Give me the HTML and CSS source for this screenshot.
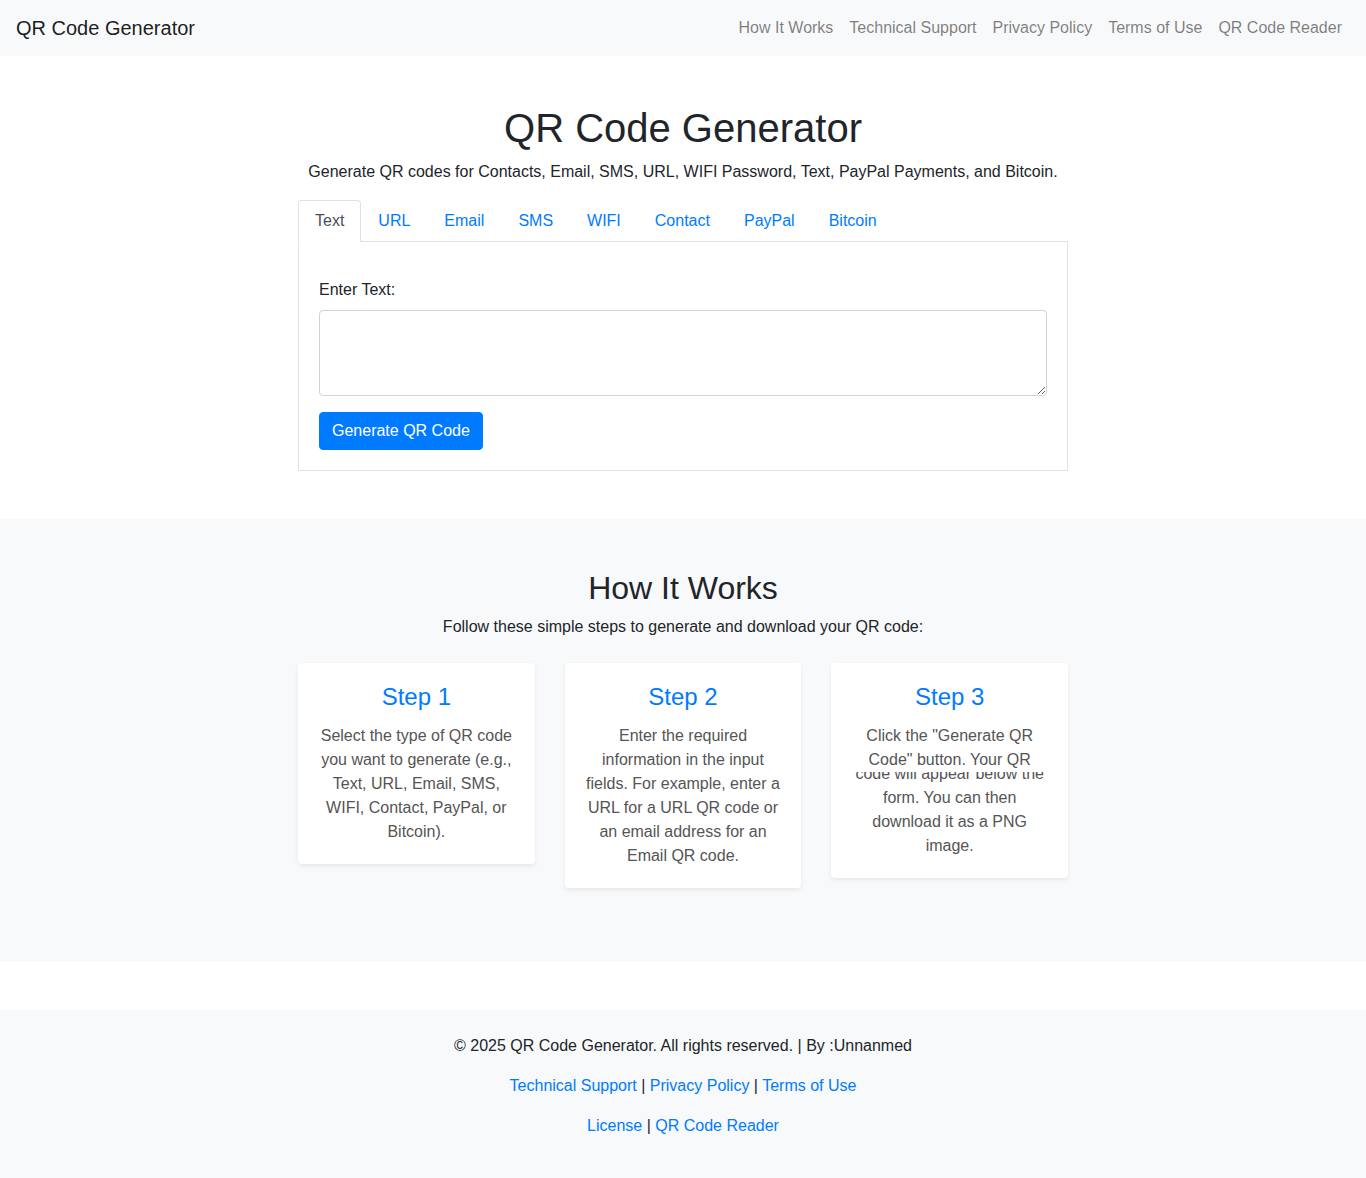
FILE: index.html
```html
<!DOCTYPE html>
<html lang="en">
<head>
<meta charset="utf-8">
<title>QR Code Generator</title>
<link rel="stylesheet" href="styles.css">
</head>
<body>
<nav class="navbar">
  <a class="brand" href="#">QR Code Generator</a>
  <ul class="nav-links">
    <li><a href="#">How It Works</a></li>
    <li><a href="#">Technical Support</a></li>
    <li><a href="#">Privacy Policy</a></li>
    <li><a href="#">Terms of Use</a></li>
    <li><a href="#">QR Code Reader</a></li>
  </ul>
</nav>

<main class="container main">
  <h1 class="title">QR Code Generator</h1>
  <p class="lead">Generate QR codes for Contacts, Email, SMS, URL, WIFI Password, Text, PayPal Payments, and Bitcoin.</p>
  <ul class="tabs">
    <li><a class="tab active" href="#">Text</a></li>
    <li><a class="tab" href="#">URL</a></li>
    <li><a class="tab" href="#">Email</a></li>
    <li><a class="tab" href="#">SMS</a></li>
    <li><a class="tab" href="#">WIFI</a></li>
    <li><a class="tab" href="#">Contact</a></li>
    <li><a class="tab" href="#">PayPal</a></li>
    <li><a class="tab" href="#">Bitcoin</a></li>
  </ul>
  <div class="tab-content">
    <div class="form-group">
      <label class="label" for="t">Enter Text:</label>
      <textarea id="t" class="textarea" rows="3"></textarea>
    </div>
    <button class="btn">Generate QR Code</button>
  </div>
</main>

<section class="how">
  <div class="container">
    <h2 class="how-title">How It Works</h2>
    <p class="how-sub">Follow these simple steps to generate and download your QR code:</p>
    <div class="steps">
      <div class="step">
        <h4 class="step-title">Step 1</h4>
        <p class="step-text">Select the type of QR code you want to generate (e.g., Text, URL, Email, SMS, WIFI, Contact, PayPal, or Bitcoin).</p>
      </div>
      <div class="step">
        <h4 class="step-title">Step 2</h4>
        <p class="step-text">Enter the required information in the input fields. For example, enter a URL for a URL QR code or an email address for an Email QR code.</p>
      </div>
      <div class="step">
        <h4 class="step-title">Step 3</h4>
        <p class="step-text step-a">Click the "Generate QR Code" button. Your QR</p>
        <p class="step-text step-b">code will appear below the form. You can then download it as a PNG image.</p>
      </div>
    </div>
  </div>
</section>

<footer class="footer">
  <p>© 2025 QR Code Generator. All rights reserved. | By :Unnanmed</p>
  <p><a href="#">Technical Support</a> | <a href="#">Privacy Policy</a> | <a href="#">Terms of Use</a></p>
  <p><a href="#">License</a> | <a href="#">QR Code Reader</a></p>
</footer>
</body>
</html>
```

FILE: styles.css
```css
* { box-sizing: border-box; }
html, body { margin: 0; padding: 0; }
body {
  font-family: "Liberation Sans", Arial, sans-serif;
  font-size: 16px;
  line-height: 1.5;
  color: #212529;
  background: #fff;
}
a { color: #007bff; text-decoration: none; }
h1, h2, h4, p { margin: 0; font-weight: 500; }

.navbar {
  display: flex;
  align-items: center;
  justify-content: space-between;
  height: 56px;
  padding: 0 16px;
  background: #f8f9fa;
}
.brand { font-size: 20px; color: rgba(0,0,0,.9); line-height: 30px; }
.nav-links { display: flex; list-style: none; margin: 0; padding: 0; }
.nav-links a { display: block; padding: 8px; color: rgba(0,0,0,.5); }

.container { max-width: 800px; margin: 0 auto; padding: 0 15px; }
.main { margin-top: 48px; }
.title { font-size: 40px; line-height: 1.2; text-align: center; margin-bottom: 8px; }
.lead { font-weight: 400; text-align: center; margin-bottom: 16px; }

.tabs {
  display: flex;
  list-style: none;
  margin: 0;
  padding: 0;
  border-bottom: 1px solid #dee2e6;
}
.tabs li { margin-bottom: -1px; }
.tab {
  display: block;
  padding: 8px 16px;
  border: 1px solid transparent;
  border-radius: 4px 4px 0 0;
}
.tab.active { color: #495057; background: #fff; border-color: #dee2e6 #dee2e6 #fff; }

.tab-content {
  border: 1px solid #dee2e6;
  border-top: 0;
  padding: 36px 20px 20px;
}
.form-group { margin-bottom: 16px; }
.label { display: block; margin-bottom: 8px; }
.textarea {
  display: block;
  width: 100%;
  height: 86px;
  padding: 6px 12px;
  font: inherit;
  border: 1px solid #ced4da;
  border-radius: 4px;
  resize: vertical;
}
.btn {
  font: inherit;
  color: #fff;
  background: #007bff;
  border: 1px solid #007bff;
  border-radius: 4px;
  padding: 6px 12px;
  line-height: 24px;
  cursor: pointer;
}

.how {
  margin-top: 48px;
  background: #f8f9fa;
  padding: 50px 0 49px;
}
.how-title { font-size: 32px; line-height: 1.2; text-align: center; margin-bottom: 8px; }
.how-sub { font-weight: 400; text-align: center; margin-bottom: 24px; }
.steps {
  display: grid;
  grid-template-columns: repeat(3, 1fr);
  column-gap: 30px;
  align-items: start;
}
.step {
  background: #fff;
  border-radius: 4px;
  box-shadow: 0 .125rem .25rem rgba(0,0,0,.075);
  padding: 20px;
  text-align: center;
  margin-bottom: 25px;
}
.step-title { font-size: 24px; line-height: 1.2; color: #007bff; margin-bottom: 12px; }
.step-text { font-weight: 400; color: #555; }
.step-a { position: relative; z-index: 1; background: #fff; }
.step-b { margin-top: -10px; }

.footer {
  margin-top: 48px;
  background: #f8f9fa;
  padding: 24px 0 24px;
  text-align: center;
}
.footer p { font-weight: 400; margin-bottom: 16px; }
```
